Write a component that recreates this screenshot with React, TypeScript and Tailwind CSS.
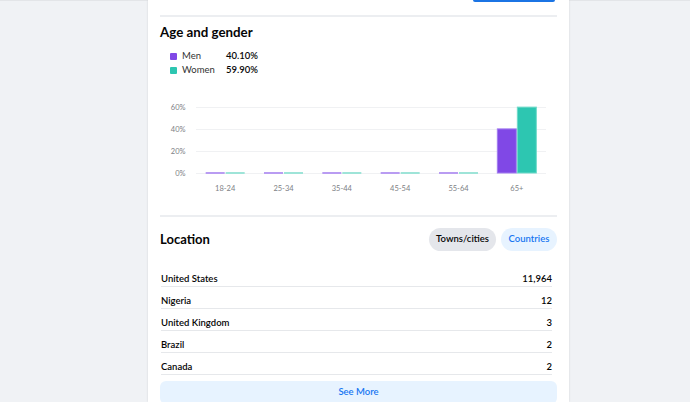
import React from "react";

const cats = ["18-24", "25-34", "35-44", "45-54", "55-64", "65+"];
const men = [0, 0, 0, 0, 0, 40.1];
const women = [0, 0, 0, 0, 0, 59.9];
const FONT = "Lato, 'Noto Sans', sans-serif";

function Chart() {
  const x0 = 196;
  const x1 = 546;
  const band = (x1 - x0) / 6;
  const base = 173;
  const k = 1.1;
  return (
    <svg width={397} height={138} className="block">
      <g transform="translate(-160,-77)">
        {[0, 20, 40, 60].map((v) => {
          const y = base - v * k;
          return (
            <g key={v}>
              <line x1={x0} x2={x1} y1={y + 0.5} y2={y + 0.5} stroke="#f0f1f3" strokeWidth={1} />
              <text x={185.5} y={y + 3} textAnchor="end" fontSize={7.5} fill="#7d8085" fontFamily={FONT}>
                {v}%
              </text>
            </g>
          );
        })}
        {cats.map((c, i) => {
          const cx = x0 + band * (i + 0.5);
          const mh = men[i] * k;
          const wh = women[i] * k;
          return (
            <g key={c}>
              {mh > 0 ? (
                <rect x={cx - 19.5} y={base - mh} width={19} height={mh} fill="#8048e6" stroke="#a27cf0" strokeWidth={1} />
              ) : (
                <rect x={cx - 19.5} y={base - 1} width={19} height={2} fill="#b99cf2" />
              )}
              {wh > 0 ? (
                <rect x={cx + 0.5} y={base - wh} width={19} height={wh} fill="#2dc6b1" stroke="#6fdac9" strokeWidth={1} />
              ) : (
                <rect x={cx + 0.5} y={base - 1} width={19} height={2} fill="#9ee4d8" />
              )}
              <text x={cx} y={190.5} textAnchor="middle" fontSize={7.5} fill="#7d8085" fontFamily={FONT}>
                {c}
              </text>
            </g>
          );
        })}
      </g>
    </svg>
  );
}

const rows: [string, string][] = [
  ["United States", "11,964"],
  ["Nigeria", "12"],
  ["United Kingdom", "3"],
  ["Brazil", "2"],
  ["Canada", "2"],
];

export default function App() {
  return (
    <div className="h-[402px] w-[690px] overflow-hidden bg-[#f0f2f5] font-['Lato','Noto_Sans',sans-serif] text-[#050505] shadow-[inset_0_1px_0_#e3e5e8]">
      <div className="ml-[148px] h-[402px] w-[421px] bg-white px-3 shadow-[0_0_2px_rgba(0,0,0,0.12)]">
        <div className="flex h-[2px] justify-end">
          <div className="mr-[2px] h-[2px] w-[82px] rounded-b-[2px] bg-[#1b74e4]" />
        </div>
        <div className="mt-[13px] h-[2px] bg-[#eceef1]" />
        <div className="mt-[6px] text-[13.3px] font-bold leading-[18px]">Age and gender</div>
        <div className="ml-[10px] mt-[8px] flex flex-col">
          {[
            ["Men", "40.10%", "bg-[#8048e6]"],
            ["Women", "59.90%", "bg-[#2dc6b1]"],
          ].map(([l, v, c]) => (
            <div key={l} className="flex h-[14px] items-center text-[9.5px] leading-[14px]">
              <span className={`h-[7px] w-[7px] rounded-[1px] ${c}`} />
              <span className="ml-[5px] w-[44px] text-[#333]">{l}</span>
              <span className="w-[30px] whitespace-nowrap text-right font-semibold">{v}</span>
            </div>
          ))}
        </div>
        <Chart />
        <div className="h-[2px] bg-[#eceef1]" />
        <div className="mt-[10px] flex h-[24px] items-center justify-between">
          <div className="text-[13px] font-bold leading-[18px]">Location</div>
          <div className="flex gap-[5px]">
            <div className="flex h-[23px] w-[67px] items-center justify-center rounded-full bg-[#e4e6eb] text-[9.5px] font-semibold">
              Towns/cities
            </div>
            <div className="flex h-[23px] w-[56px] items-center justify-center rounded-full bg-[#e7f3ff] text-[9.5px] font-semibold text-[#1877f2]">
              Countries
            </div>
          </div>
        </div>
        <div className="ml-[1px] mr-[5px] mt-[14px]">
          {rows.map(([n, v]) => (
            <div key={n} className="flex justify-between border-b border-[#e6e8eb] pb-[1px] pt-[7px] text-[9.5px] font-semibold leading-[13px]">
              <span>{n}</span>
              <span>{v}</span>
            </div>
          ))}
        </div>
        <div className="mt-[6px] flex h-[23px] items-center justify-center rounded-md bg-[#e7f3ff] text-[9.5px] font-semibold text-[#1877f2]">
          See More
        </div>
      </div>
    </div>
  );
}
